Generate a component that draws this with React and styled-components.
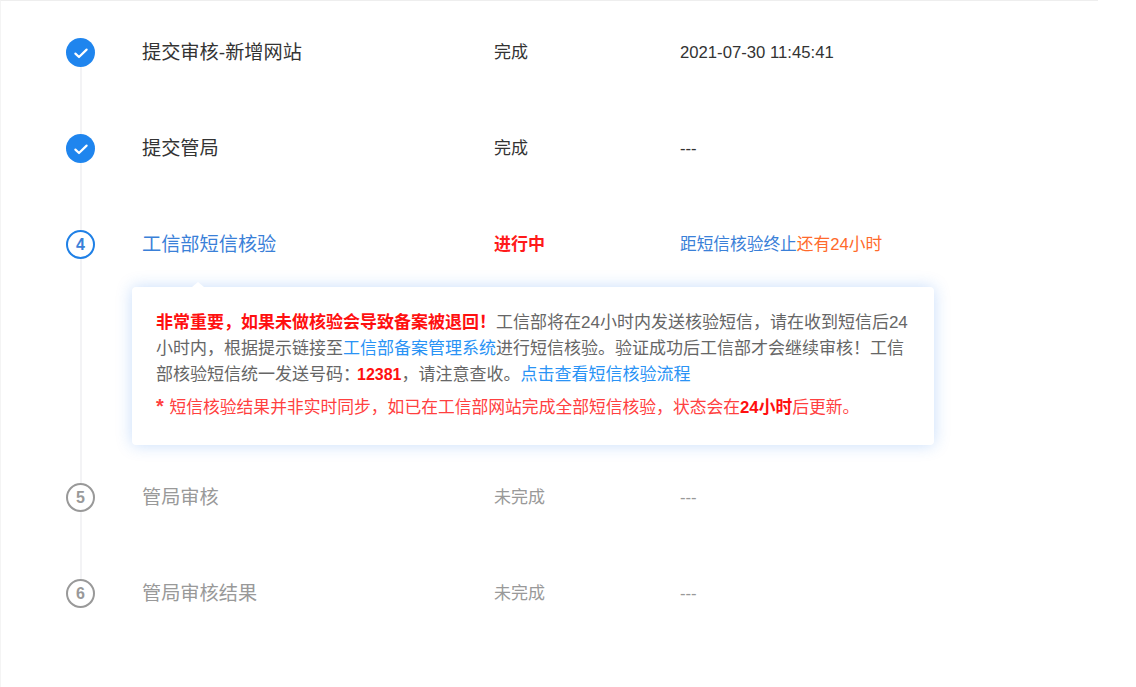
import styled, { createGlobalStyle } from 'styled-components';

const GlobalStyle = createGlobalStyle`
  html, body {
    margin: 0;
    padding: 0;
    background: #fff;
  }
  body {
    font-family: "Liberation Sans", "Noto Sans CJK SC", sans-serif;
  }
`;

const steps = [
  { id: 2, state: 'done', title: '提交审核-新增网站', status: '完成', time: '2021-07-30 11:45:41' },
  { id: 3, state: 'done', title: '提交管局', status: '完成', time: '---' },
  { id: 4, state: 'active', title: '工信部短信核验', status: '进行中' },
  { id: 5, state: 'todo', title: '管局审核', status: '未完成', time: '---' },
  { id: 6, state: 'todo', title: '管局审核结果', status: '未完成', time: '---', last: true },
];

const titleColors = { done: '#333', active: '#3a80d8', todo: '#999' };
const statusColors = { done: '#333', active: '#ff1a1a', todo: '#999' };
const ringColors = { active: '#1f80e6', todo: '#999' };

export default function App() {
  return (
    <Page lang="zh-CN">
      <GlobalStyle />
      <Sheet>
        {steps.map((step) => (
          <Step key={step.id}>
            <Rail>
              {step.state === 'done' ? (
                <DoneDot>
                  <svg width="16" height="14" viewBox="0 0 16 14" fill="none">
                    <path d="M2.4 7.6 6 11 13.6 3.6" stroke="#fff" strokeWidth="2.2" strokeLinecap="round" strokeLinejoin="round" />
                  </svg>
                </DoneDot>
              ) : (
                <NumberDot $state={step.state}>{step.id}</NumberDot>
              )}
              {!step.last && <Connector />}
            </Rail>
            <Body>
              <Row>
                <Title $state={step.state}>{step.title}</Title>
                <Status $state={step.state}>{step.status}</Status>
                {step.state === 'active' ? (
                  <Time>
                    <Blue>距短信核验终止</Blue>
                    <Orange>还有24小时</Orange>
                  </Time>
                ) : (
                  <Time $state={step.state}>{step.time}</Time>
                )}
              </Row>
              {step.state === 'active' && (
                <Panel>
                  <Para>
                    <Strong>非常重要，如果未做核验会导致备案被退回！</Strong>
                    工信部将在24小时内发送核验短信，请在收到短信后24小时内，根据提示链接至
                    <Link>工信部备案管理系统</Link>
                    进行短信核验。验证成功后工信部才会继续审核！工信部核验短信统一发送号码：
                    <Phone>12381</Phone>
                    ，请注意查收。
                    <Link>点击查看短信核验流程</Link>
                  </Para>
                  <Note>
                    <Star>*</Star> 短信核验结果并非实时同步，如已在工信部网站完成全部短信核验，状态会在
                    <Strong>24小时</Strong>
                    后更新。
                  </Note>
                </Panel>
              )}
            </Body>
          </Step>
        ))}
      </Sheet>
    </Page>
  );
}

const Page = styled.div`
  width: 100%;
  height: 687px;
  overflow: hidden;
  background: #fff;
`;

const Sheet = styled.div`
  width: 1098px;
  box-sizing: border-box;
  height: 687px;
  padding: 37px 0 0 65px;
  border-top: 1px solid #eee;
  border-left: 1px solid #f4f4f4;
`;

const Step = styled.div`
  display: flex;
  gap: 36px;
`;

const Rail = styled.div`
  width: 29px;
  display: flex;
  flex-direction: column;
  align-items: center;
  flex-shrink: 0;
`;

const DoneDot = styled.div`
  width: 29px;
  height: 29px;
  border-radius: 50%;
  background: #1f85ee;
  display: flex;
  align-items: center;
  justify-content: center;
  flex-shrink: 0;
`;

const NumberDot = styled.div`
  width: 29px;
  height: 29px;
  box-sizing: border-box;
  border-radius: 50%;
  border: 2px solid ${(p) => ringColors[p.$state]};
  color: ${(p) => (p.$state === 'active' ? '#3a80d8' : '#999')};
  font-size: 16px;
  font-weight: 700;
  display: flex;
  align-items: center;
  justify-content: center;
  flex-shrink: 0;
`;

const Connector = styled.div`
  width: 2px;
  flex: 1;
  background: #f3f3f5;
`;

const Body = styled.div`
  width: 803px;
`;

const Row = styled.div`
  height: 96px;
  box-sizing: border-box;
  padding: 3px 0 0 11px;
  display: grid;
  grid-template-columns: 352px 186px 1fr;
  align-items: start;
`;

const Title = styled.div`
  font-size: 19.2px;
  line-height: 23px;
  color: ${(p) => titleColors[p.$state]};
`;

const Status = styled.div`
  font-size: 17px;
  line-height: 23px;
  font-weight: ${(p) => (p.$state === 'active' ? 700 : 400)};
  color: ${(p) => statusColors[p.$state]};
`;

const Time = styled.div`
  font-size: 16.7px;
  line-height: 23px;
  color: ${(p) => (p.$state === 'todo' ? '#999' : '#333')};
`;

const Blue = styled.span`
  color: #3a80d8;
`;

const Orange = styled.span`
  color: #ff6a2b;
`;

const Panel = styled.div`
  position: relative;
  box-sizing: border-box;
  width: 802px;
  height: 158px;
  margin: -39px 0 38px 1px;
  padding: 23px 23px 0 24px;
  background: #fff;
  border-radius: 4px;
  box-shadow: 0 0 16px rgba(30, 120, 240, 0.25);

  &::before {
    content: '';
    position: absolute;
    top: -5px;
    left: 60px;
    border-left: 6px solid transparent;
    border-right: 6px solid transparent;
    border-bottom: 5px solid #fff;
  }
`;

const Para = styled.p`
  margin: 0;
  font-size: 17px;
  line-height: 26px;
  color: #666;
`;

const Note = styled.p`
  margin: 7px 0 0;
  font-size: 16.8px;
  line-height: 26px;
  color: #ff4040;
`;

const Star = styled.span`
  font-size: 20px;
  font-weight: 700;
  line-height: 20px;
  margin-right: 1px;
`;

const Strong = styled.b`
  color: #ff1010;
  font-weight: 700;
`;

const Phone = styled(Strong)`
  font-size: 16px;
  margin-left: -3px;
`;

const Link = styled.span`
  color: #2a93f5;
`;
